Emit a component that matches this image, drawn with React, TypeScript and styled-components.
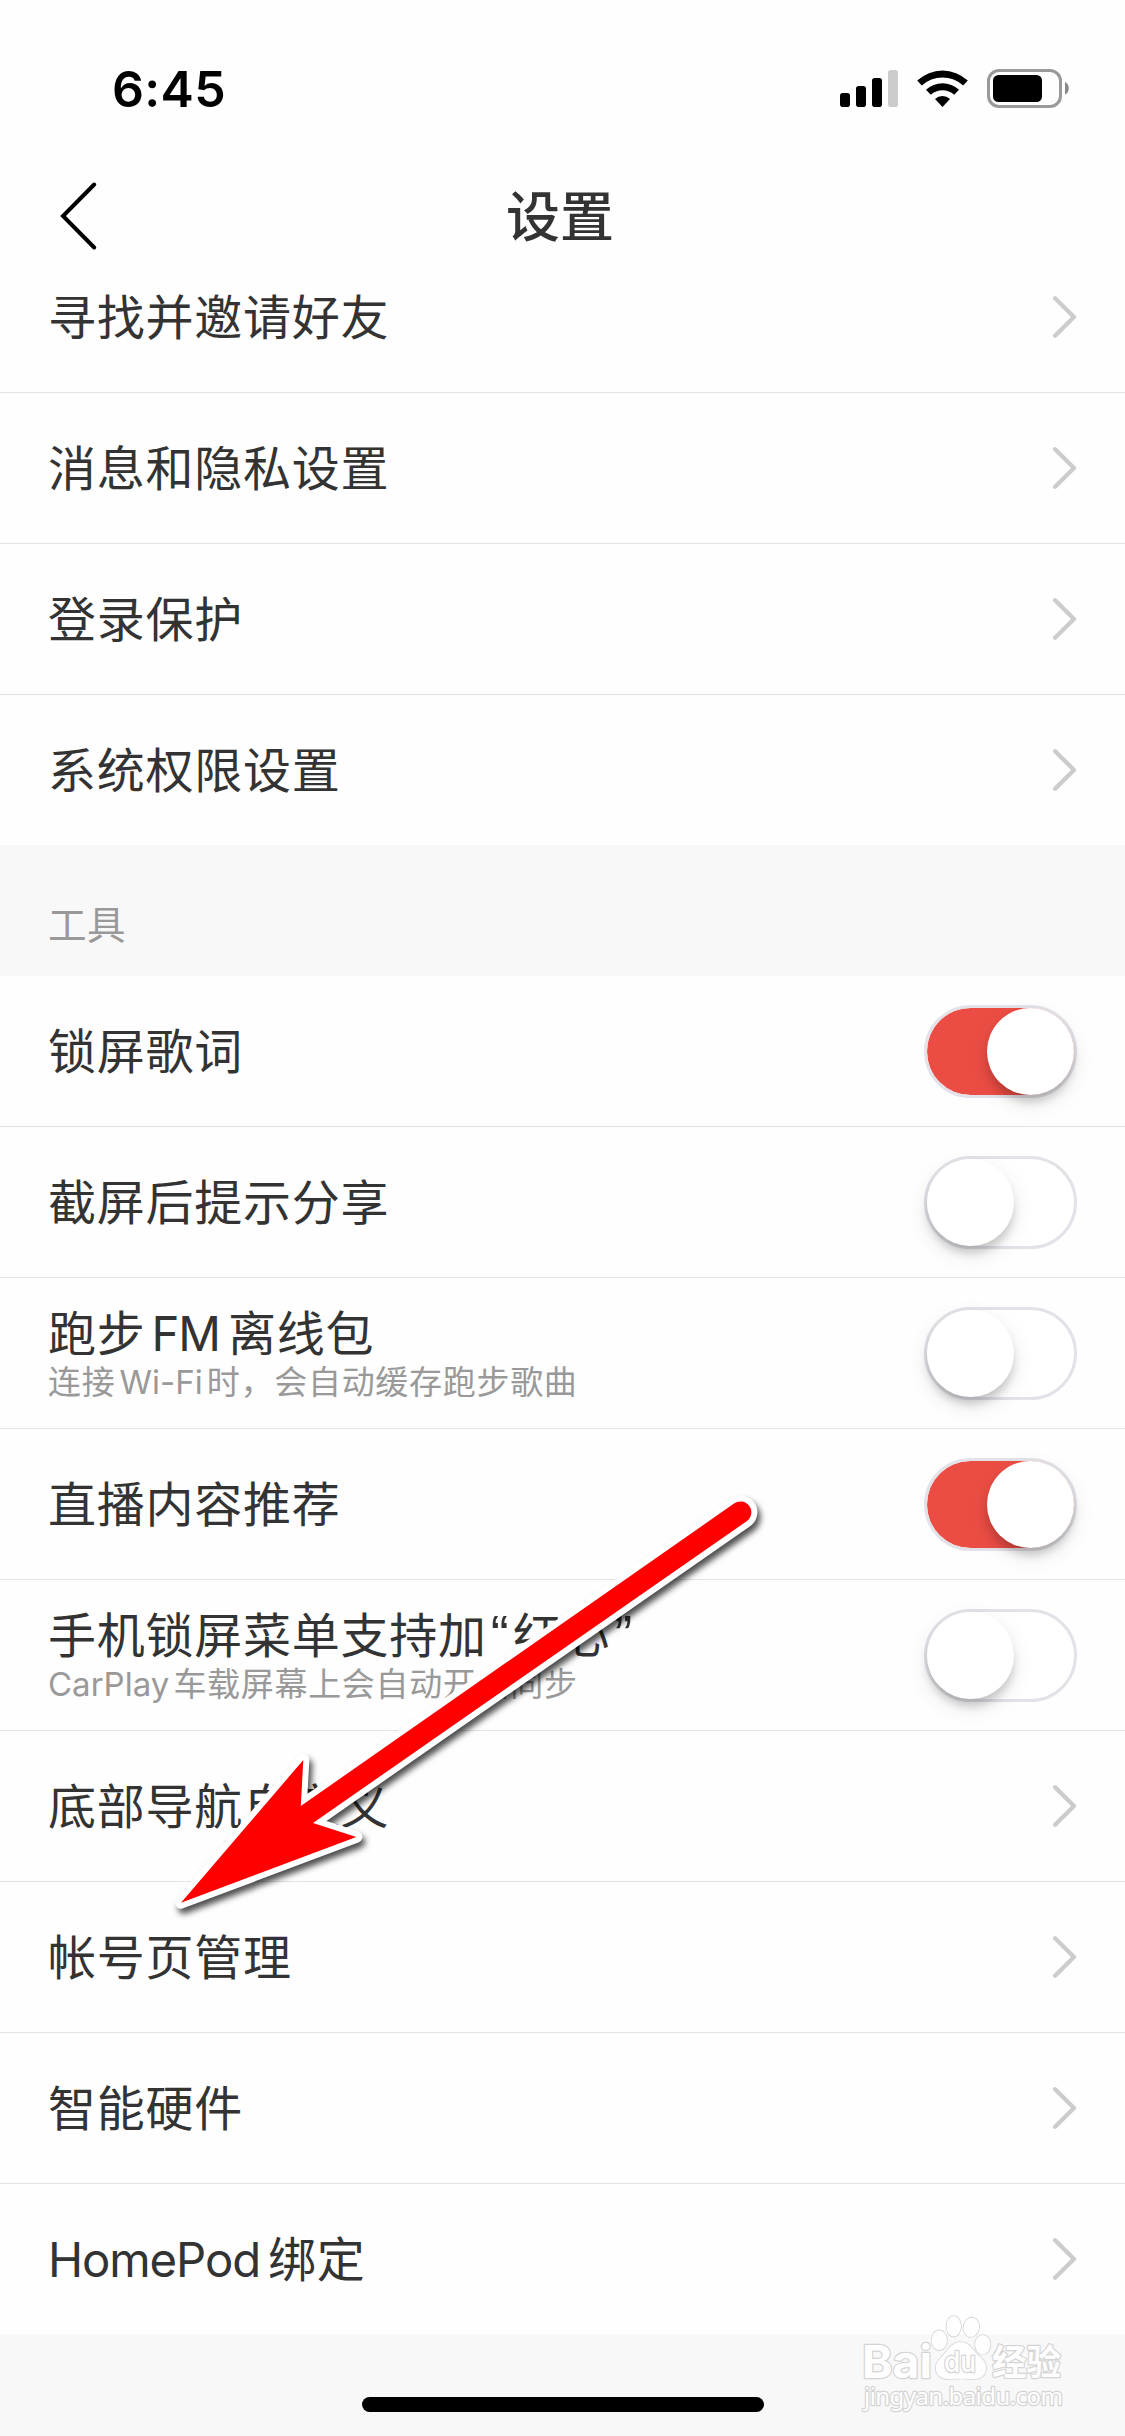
import React from 'react';
import styled, { createGlobalStyle } from 'styled-components';

const GlobalStyle = createGlobalStyle`
  * { box-sizing: border-box; }
  html, body { margin: 0; padding: 0; background: #f8f8f8; }
`;

const Screen = styled.div`
  position: relative;
  width: 1125px;
  height: 2436px;
  overflow: hidden;
  display: flex;
  flex-direction: column;
  background: #f8f8f8;
  color: #333;
  font-family: Inter, 'Noto Sans CJK SC', sans-serif;
`;

const StatusBar = styled.header`
  flex: none;
  height: 132px;
  padding: 45px 54px 0 112px;
  display: flex;
  justify-content: space-between;
  align-items: flex-start;
  background: #fefefe;
`;

const Clock = styled.time`
  font-size: 50px;
  line-height: 88px;
  font-weight: 600;
  letter-spacing: 0.3px;
  color: #000;
`;

const StatusIcons = styled.svg`
  display: block;
  margin-top: 20px;
  width: 234px;
  height: 50px;
`;

const NavBar = styled.nav`
  flex: none;
  height: 132px;
  padding: 36px 57px 0;
  display: grid;
  grid-template-columns: 1fr auto 1fr;
  align-items: center;
  background: #fefefe;
`;

const BackButton = styled.button`
  justify-self: start;
  padding: 0;
  border: 0;
  background: none;
  display: flex;
`;

const NavTitle = styled.h1`
  margin: 0 5px 0 0;
  padding-top: 3px;
  font-size: 54px;
  line-height: 60px;
  font-weight: 500;
`;

const List = styled.ul`
  flex: none;
  list-style: none;
  margin: 0;
  padding: 0;
  background: #fefefe;
`;

const Row = styled.li<{ $clipped?: boolean }>`
  height: ${(p) => (p.$clipped ? '129px' : '151px')};
  padding: 0 48px ${(p) => (p.$clipped ? '22px' : '0')};
  display: flex;
  align-items: center;
  justify-content: space-between;
  border-bottom: 1px solid #e3e3e4;

  &:last-child {
    height: 150px;
    border-bottom: 0;
  }
`;

const Labels = styled.div`
  display: flex;
  flex-direction: column;
  padding-top: 1px;
  white-space: nowrap;
`;

const Label = styled.span<{ $compact?: boolean }>`
  font-size: 48px;
  line-height: ${(p) => (p.$compact ? '56px' : '72px')};
  letter-spacing: 0.75px;
`;

const Note = styled.span`
  font-size: 33px;
  line-height: 40px;
  letter-spacing: 0.7px;
  color: #999;
`;

const Latin = styled.span<{ $leading?: boolean }>`
  margin: 0 0.125em 0 ${(p) => (p.$leading ? '0' : '0.125em')};
  letter-spacing: 0;

  ${Label} > & {
    margin-right: 0.17em;
    font-size: 0.985em;
    letter-spacing: -0.023em;
  }
`;

const Quote = styled.span`
  margin: 0 4px;
  font-family: 'Liberation Sans', sans-serif;
  font-size: 54px;
  line-height: 1;
  letter-spacing: 0;
`;

const SectionTitle = styled.h2`
  flex: none;
  height: 131px;
  margin: 0;
  padding: 51px 48px 0;
  font-size: 38.5px;
  line-height: 58px;
  font-weight: 400;
  letter-spacing: 0.4px;
  color: #999;
`;

const Track = styled.span<{ $on: boolean }>`
  flex: none;
  width: 153px;
  height: 93px;
  border: 3px solid #e3e2e8;
  border-radius: 47px;
  display: flex;
  justify-content: ${(p) => (p.$on ? 'flex-end' : 'flex-start')};
  background: ${(p) => (p.$on ? '#eb4d44' : '#fff')};
  background-clip: padding-box;
`;

const Knob = styled.span`
  width: 87px;
  height: 87px;
  border-radius: 50%;
  background: #fff;
  box-shadow: 0 8px 9px -1px rgba(0, 0, 0, 0.17), 0 8px 22px rgba(0, 0, 0, 0.1);
`;

const Arrow = styled.svg`
  position: absolute;
  left: 150px;
  top: 1480px;
  width: 640px;
  height: 460px;
  overflow: visible;
`;

const ArrowShape = styled.g`
  filter: drop-shadow(3px 5px 3px rgba(0, 0, 0, 0.7));
`;

const Footer = styled.footer`
  flex: 1;
  display: flex;
  justify-content: center;
  align-items: flex-end;
  padding: 0 0 24px 1px;
`;

const HomeIndicator = styled.div`
  width: 402px;
  height: 15px;
  border-radius: 8px;
  background: #000;
`;

const Watermark = styled.svg`
  position: absolute;
  left: 840px;
  top: 2280px;
  width: 285px;
  height: 156px;
`;

const BackIcon = () => (
  <svg width="42" height="70" viewBox="0 0 42 70" fill="none">
    <path d="M37.200 3.500 6 35l31.200 31.500" stroke="#000" strokeWidth="4" strokeLinecap="round" />
  </svg>
);

const Chevron = () => (
  <svg width="27" height="46" viewBox="0 0 27 46" fill="none">
    <path d="M5.100 4.200 24 23 5.100 41.800" stroke="#ccc" strokeWidth="4.300" strokeLinecap="round" strokeLinejoin="round" />
  </svg>
);

const Toggle = ({ on }: { on: boolean }) => (
  <Track $on={on} role="switch" aria-checked={on}>
    <Knob />
  </Track>
);

type Item = {
  label: React.ReactNode;
  note?: React.ReactNode;
  toggle?: boolean;
};

const accountItems: Item[] = [
  { label: '寻找并邀请好友' },
  { label: '消息和隐私设置' },
  { label: '登录保护' },
  { label: '系统权限设置' },
];

const toolItems: Item[] = [
  { label: '锁屏歌词', toggle: true },
  { label: '截屏后提示分享', toggle: false },
  {
    label: <>跑步<Latin>FM</Latin>离线包</>,
    note: <>连接<Latin>Wi-Fi</Latin>时，会自动缓存跑步歌曲</>,
    toggle: false,
  },
  { label: '直播内容推荐', toggle: true },
  {
    label: <>手机锁屏菜单支持加<Quote>“</Quote>红心<Quote>”</Quote></>,
    note: <><Latin $leading>CarPlay</Latin>车载屏幕上会自动开启同步</>,
    toggle: false,
  },
  { label: '底部导航自定义' },
  { label: '帐号页管理' },
  { label: '智能硬件' },
  { label: <><Latin $leading>HomePod</Latin>绑定</> },
];

const SettingsList = ({ items, clipFirst }: { items: Item[]; clipFirst?: boolean }) => (
  <List>
    {items.map((item, i) => (
      <Row key={i} $clipped={clipFirst && i === 0}>
        <Labels>
          <Label $compact={!!item.note}>{item.label}</Label>
          {item.note && <Note>{item.note}</Note>}
        </Labels>
        {item.toggle === undefined ? <Chevron /> : <Toggle on={item.toggle} />}
      </Row>
    ))}
  </List>
);

export default function App() {
  return (
    <Screen>
      <GlobalStyle />
      <StatusBar>
        <Clock>6:45</Clock>
        <StatusIcons viewBox="837 65 234 50">
          <rect x="840" y="93" width="10" height="14" rx="2.8" />
          <rect x="856" y="86" width="10" height="21" rx="2.8" />
          <rect x="872" y="78" width="10" height="29" rx="2.8" />
          <rect x="888" y="70" width="10" height="37" rx="2.8" fill="#ccc" />
          <path d="M917.2 80.6a37 37 0 0 1 50.6 0l-4.6 4.9a30.500 30.500 0 0 0-41.400 0z" />
          <path d="M926 89.800a24.200 24.200 0 0 1 33 0l-4.800 5a17.200 17.200 0 0 0-23.400 0z" />
          <path d="M935 99a11.200 11.200 0 0 1 15 0l-7.500 8z" />
          <rect x="988.500" y="70.500" width="72" height="36" rx="10.500" fill="none" stroke="#999" strokeWidth="3" />
          <rect x="993" y="75" width="49" height="27" rx="5.500" />
          <path d="M1065 82c5 2 5 10.500 0 12.500z" fill="#888" />
        </StatusIcons>
      </StatusBar>
      <NavBar>
        <BackButton aria-label="返回">
          <BackIcon />
        </BackButton>
        <NavTitle>设置</NavTitle>
      </NavBar>
      <SettingsList items={accountItems} clipFirst />
      <SectionTitle>工具</SectionTitle>
      <SettingsList items={toolItems} />
      <Footer>
        <HomeIndicator />
      </Footer>

      <Arrow viewBox="150 1480 640 460">
        <ArrowShape>
          <path
            d="M181 1902.700 303.300 1760 300.800 1806 734 1503.600A10.800 10.800 0 0 1 747 1521L313 1823 356.300 1837Z"
            fill="#f00"
            stroke="#fff"
            strokeWidth="12"
            strokeLinejoin="round"
            paintOrder="stroke"
          />
        </ArrowShape>
      </Arrow>

      <Watermark viewBox="0 0 285 156">
        <g fill="#fefefe" stroke="#d4d4d4" strokeWidth="2.400" strokeLinejoin="round" paintOrder="stroke">
          <text x="22" y="98" fontFamily="Inter" fontWeight="700" fontSize="45" textLength="70" lengthAdjust="spacingAndGlyphs">Bai</text>
          <g strokeWidth="1.600">
            <ellipse cx="99.300" cy="60.300" rx="7.700" ry="10" />
            <ellipse cx="113.700" cy="46.300" rx="7.300" ry="10.300" />
            <ellipse cx="131.300" cy="47.300" rx="7.800" ry="9.700" transform="rotate(10 131.300 47.300)" />
            <ellipse cx="142.700" cy="64.700" rx="7.700" ry="9.700" />
            <path d="M120.700 62C128 62 132 68 136 73C141 78 146 81 146 88C146 96 140 99.500 133 99C126 98.500 116 98.500 109 99C101 99.500 95.700 95 95.700 88C95.700 81 101 78 105 73C109 68 113 62 120.700 62Z" />
          </g>
          <text x="104" y="92" fontFamily="Inter" fontWeight="500" fontSize="28" textLength="32" lengthAdjust="spacingAndGlyphs">du</text>
          <text x="152" y="95" fontFamily="'Noto Sans CJK SC'" fontWeight="700" fontSize="35" textLength="69" lengthAdjust="spacingAndGlyphs">经验</text>
          <text x="24" y="125" fontFamily="'Noto Sans'" fontSize="24" textLength="199" lengthAdjust="spacing">jingyan.baidu.com</text>
        </g>
      </Watermark>
    </Screen>
  );
}
